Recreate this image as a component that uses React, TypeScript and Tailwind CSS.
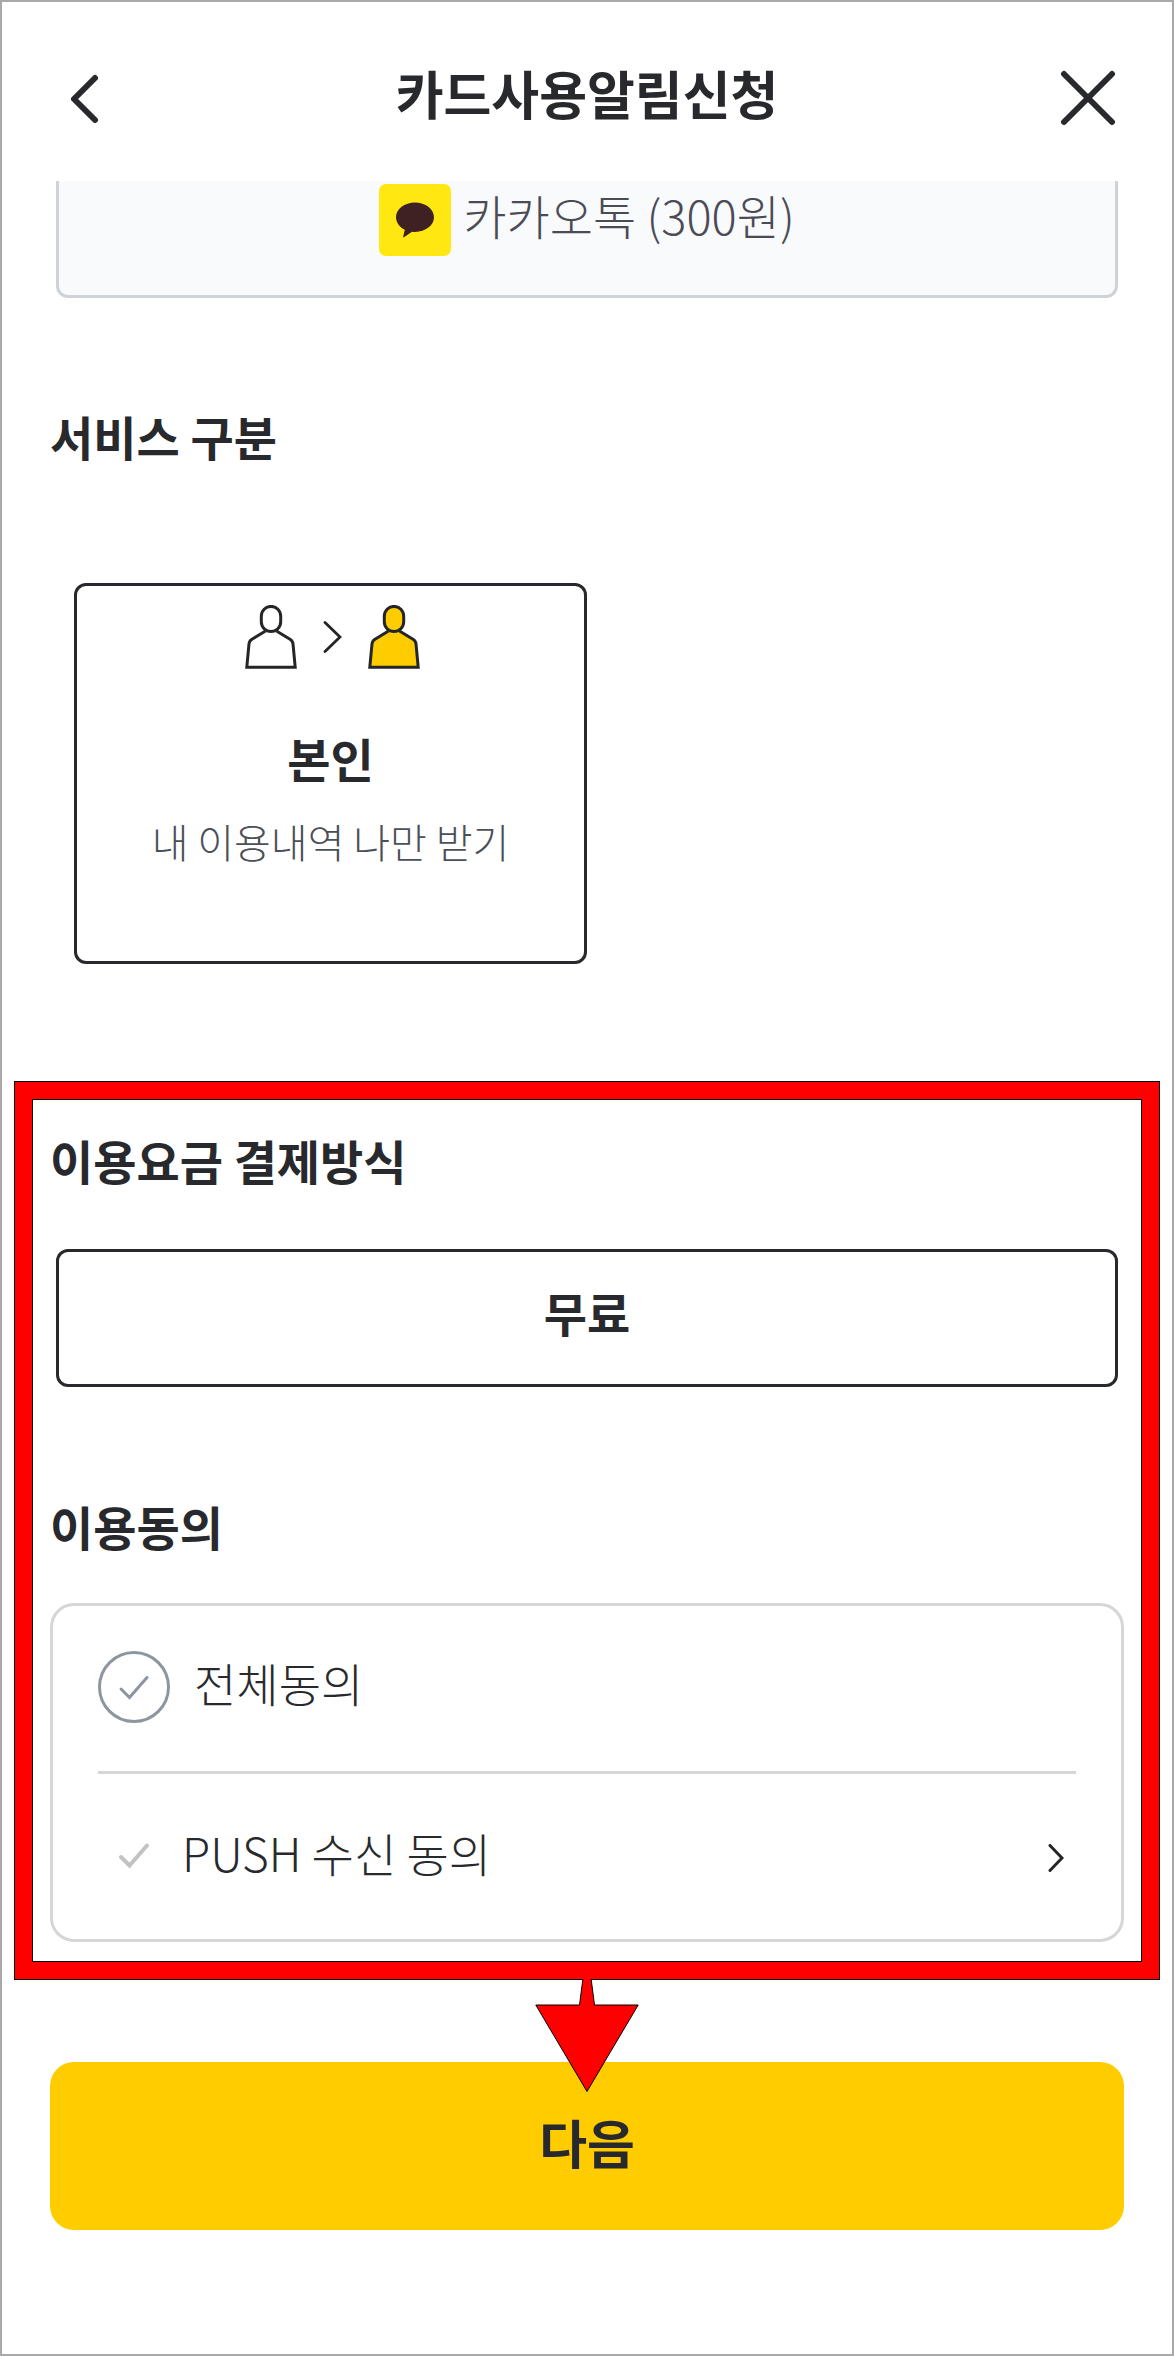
import { useState } from "react";
import type { ReactNode } from "react";

function PersonIcon({ fill }: { fill: string }) {
  return (
    <svg width="52" height="64" viewBox="0 0 52 64" fill={fill} stroke="#242528" strokeWidth="3" aria-hidden="true">
      <path d="M20.500 26 7 34.200Q4.300 35.800 4 38.800L1.800 62.200H50.200L48 38.800Q47.700 35.800 45 34.200L31.500 26" strokeLinejoin="miter" />
      <path d="M16.300 11.200a9.700 9.800 0 0 1 19.400 0v5.600a9.700 9.800 0 0 1-19.400 0z" />
    </svg>
  );
}

function SectionTitle({ children }: { children: ReactNode }) {
  return <h2 className="text-[47px] leading-[64px] font-bold">{children}</h2>;
}

function TalkIcon() {
  return (
    <span className="flex size-[72px] items-center justify-center rounded-[7px] bg-[#ffe812]">
      <svg width="38" height="36" viewBox="0 0 38 36" fill="#3f2023" aria-hidden="true">
        <path d="M19 0.500C8.500 0.500 0 7 0 15.300 0 20.600 3.500 25.200 8.800 27.800L7.200 34.500C7 35.500 7.700 35.600 8.300 35.100L16 29.700C17 29.900 18 29.900 19 29.900 29.500 29.900 38 23.400 38 15.300 38 7 29.500 0.500 19 0.500Z" />
      </svg>
    </span>
  );
}

export default function App() {
  const [all, setAll] = useState(false);
  const [push, setPush] = useState(false);

  return (
    <div className="flex min-h-screen flex-col border-2 border-[#a9a9a9] bg-white font-['Noto_Sans_CJK_KR',sans-serif] text-[#28292d]">
      <header className="flex items-start justify-between px-[52px] pt-[59px] pb-[54px]">
        <button type="button" aria-label="뒤로" className="flex h-[66px] w-16 items-end justify-center">
          <svg width="56" height="60" viewBox="0 0 56 60" fill="none" stroke="currentColor" strokeWidth="6" strokeLinecap="round" strokeLinejoin="round" aria-hidden="true">
            <path d="M37 11 16 32 37 53" />
          </svg>
        </button>
        <h1 className="text-[52px] leading-[64px] font-bold">카드사용알림신청</h1>
        <button type="button" aria-label="닫기" className="flex h-[66px] w-16 items-end justify-center">
          <svg width="56" height="60" viewBox="0 0 56 60" fill="none" stroke="currentColor" strokeWidth="6" strokeLinecap="round" aria-hidden="true">
            <path d="M4 7 52 55M52 7 4 55" />
          </svg>
        </button>
      </header>

      <main className="flex flex-1 flex-col">
        <div className="px-[54px]">
          <button type="button" className="flex w-full items-start justify-center gap-3 rounded-b-xl border-[3px] border-t-0 border-[#d0d3d5] bg-[#f9fafc] pt-[3px] pb-[39px] text-[47px] leading-[62px] font-light text-[#4b4b55]">
            <TalkIcon />
            <span>카카오톡 (300원)</span>
          </button>
        </div>

        <section className="px-12 pt-[106px]">
          <SectionTitle>서비스 구분</SectionTitle>
          <div className="mt-[115px] grid grid-cols-2 px-6">
            <button type="button" className="flex flex-col items-center rounded-xl border-[3px] border-[#28292d] pt-[19px] pb-[92px]">
              <span className="flex items-center gap-[26px] pl-1">
                <PersonIcon fill="none" />
                <svg width="19" height="32" viewBox="0 0 19 32" fill="none" stroke="#242528" strokeWidth="2.8" strokeLinecap="round" aria-hidden="true">
                  <path d="M2 1.500 17 16 2 30.500" />
                </svg>
                <PersonIcon fill="#ffcc00" />
              </span>
              <span className="mt-[57px] text-[47px] leading-[64px] font-bold">본인</span>
              <span className="mt-[23px] text-[40px] leading-[56px] font-light text-[#4b4f58]">내 이용내역 나만 받기</span>
            </button>
          </div>
        </section>

        <div className="relative mx-3 mt-[117px] border border-black">
          <div className="border-[17px] border-[#ff0000]">
            <div className="border border-black px-[17px] pt-7 pb-[19px]">
              <section>
                <SectionTitle>이용요금 결제방식</SectionTitle>
                <div className="mt-[57px] px-1.5">
                  <button type="button" className="w-full rounded-xl border-[3px] border-[#28292d] pt-[28px] pb-[40px] text-[47px] leading-[64px] font-bold">
                    무료
                  </button>
                </div>
              </section>

              <section className="mt-[107px]">
                <SectionTitle>이용동의</SectionTitle>
                <div className="mt-[45px] rounded-3xl border-[3px] border-[#d5d6d6] px-[45px] text-[46px] leading-[62px] font-light">
                  <label className="flex items-start gap-6 border-b-[3px] border-[#d5d6d6] pt-[45px] pb-12">
                    <span className="relative flex size-[72px]">
                      <input
                        type="checkbox"
                        checked={all}
                        onChange={(e) => {
                          setAll(e.target.checked);
                          setPush(e.target.checked);
                        }}
                        className="size-full appearance-none rounded-full border-[3px] border-[#8d96a0] checked:border-[#ffcc00]"
                      />
                      <svg className="pointer-events-none absolute inset-0" width="72" height="72" viewBox="0 0 72 72" fill="none" stroke="#8d96a0" strokeWidth="3" strokeLinecap="round" aria-hidden="true">
                        <path d="M23 38 31.500 46.500 49 26.500" />
                      </svg>
                    </span>
                    <span>전체동의</span>
                  </label>
                  <div className="flex items-end justify-between pt-[46px] pb-[55px]">
                    <label className="flex items-center gap-3">
                      <span className="relative flex h-16 w-[72px]">
                        <input
                          type="checkbox"
                          checked={push}
                          onChange={(e) => {
                            setPush(e.target.checked);
                            setAll(e.target.checked);
                          }}
                          className="size-full appearance-none"
                        />
                        <svg className="pointer-events-none absolute inset-0" width="72" height="64" viewBox="0 0 72 64" fill="none" stroke="#c3c3c3" strokeWidth="4" strokeLinecap="round" aria-hidden="true">
                          <path d="M23 37 31.500 45.500 49 25.500" />
                        </svg>
                      </span>
                      <span>PUSH 수신 동의</span>
                    </label>
                    <button type="button" aria-label="PUSH 수신 동의 내용 보기" className="flex h-[52px] w-10 items-center justify-center">
                      <svg width="16" height="28" viewBox="0 0 16 28" fill="none" stroke="#242528" strokeWidth="3" strokeLinecap="round" aria-hidden="true">
                        <path d="M2 1.500 14 14 2 26.500" />
                      </svg>
                    </button>
                  </div>
                </div>
              </section>
            </div>
          </div>
          <svg className="absolute top-full left-1/2 z-10 -translate-x-1/2" width="104" height="114" viewBox="0 0 104 114" fill="#ff0000" stroke="#000" strokeWidth="1" aria-hidden="true">
            <path d="M48-1 44.500 26H0.800L52 112.500 103.200 26H59.500L56-1Z" />
          </svg>
        </div>

        <div className="mt-[82px] px-12 pb-[124px]">
          <button type="button" className="w-full rounded-3xl bg-[#ffcc00] pt-12 pb-14 text-[52px] leading-[64px] font-bold">
            다음
          </button>
        </div>
      </main>
    </div>
  );
}
